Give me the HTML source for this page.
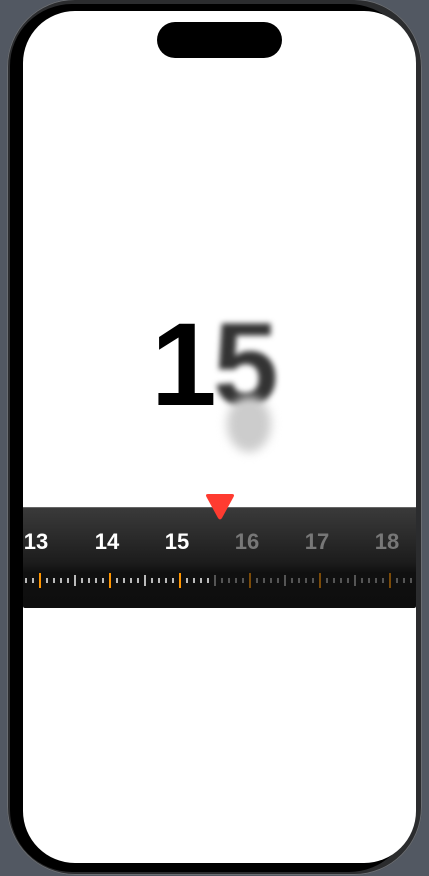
<!DOCTYPE html>
<html><head><meta charset="utf-8"><style>
html,body{margin:0;padding:0;width:429px;height:876px;overflow:hidden;background:#525862;font-family:"Liberation Sans",sans-serif}
.phone{position:absolute;left:7px;top:-1px;width:415px;height:876px;border-radius:68px;background:#2b2c2e;box-shadow:inset 0 0 0 1px #6a6d72}
.bezel{position:absolute;left:10px;top:4px;width:401px;height:868px;border-radius:62px;background:#000}
.screen{position:absolute;left:23px;top:11px;width:393px;height:852px;border-radius:52px;background:#fff;overflow:hidden}
.island{position:absolute;left:134px;top:11px;width:125px;height:36px;border-radius:18px;background:#000}
.big{position:absolute;top:279px;font-weight:bold;font-size:118px;line-height:150px;color:#000}
.band{position:absolute;left:0;top:496px;width:393px;height:100px;background:linear-gradient(#3a3a3a,#2a2a2a 30%,#1c1c1c 55%,#101010 65%,#0e0e0e);border-top:1px solid #666;border-radius:0 0 2px 2px}
.num{position:absolute;top:21px;width:60px;text-align:center;font-size:22px;font-weight:bold;color:#fff}
.dim{color:#777}
.tick{position:absolute;width:2px}
.tri{position:absolute;left:182px;top:483px}
</style></head><body>
<div class="phone"></div><div class="bezel"></div>
<div class="screen">
<div class="island"></div>
<div class="big" style="left:128px">1</div>
<div class="big" style="left:190px;color:#333;filter:blur(3px)">5</div>
<div style="position:absolute;left:204px;top:385px;width:44px;height:56px;border-radius:50%;background:#ccc;filter:blur(5px)"></div>
<div class="band" id="band">
<div class="num" style="left:-17px">13</div>
<div class="num" style="left:54px">14</div>
<div class="num" style="left:124px">15</div>
<div class="num dim" style="left:194px">16</div>
<div class="num dim" style="left:264px">17</div>
<div class="num dim" style="left:334px">18</div>
</div>
<svg class="tri" width="30" height="28" viewBox="0 0 30 28"><path d="M3 0 H27 Q30 0 28.5 3 L17 24 Q15 27 13 24 L1.5 3 Q0 0 3 0Z" fill="#ff3b30"/></svg>
</div>
<script>
var b=document.getElementById('band');
for(var x=3;x<393;x+=7){
 var i=Math.round((x-17)/7);var m=((i%10)+10)%10;
 var d=document.createElement('div');d.className='tick';
 var bright=x<192;var h,c;
 if(m==0){h=15;c=bright?'#ff9500':'#7a4a08';}
 else if(m==5){h=11;c=bright?'#bbb':'#555';}
 else{h=5;c=bright?'#bbb':'#555';}
 d.style.left=(x-1)+'px';d.style.top=(72-h/2)+'px';d.style.height=h+'px';d.style.background=c;
 b.appendChild(d);
}
</script>
</body></html>
